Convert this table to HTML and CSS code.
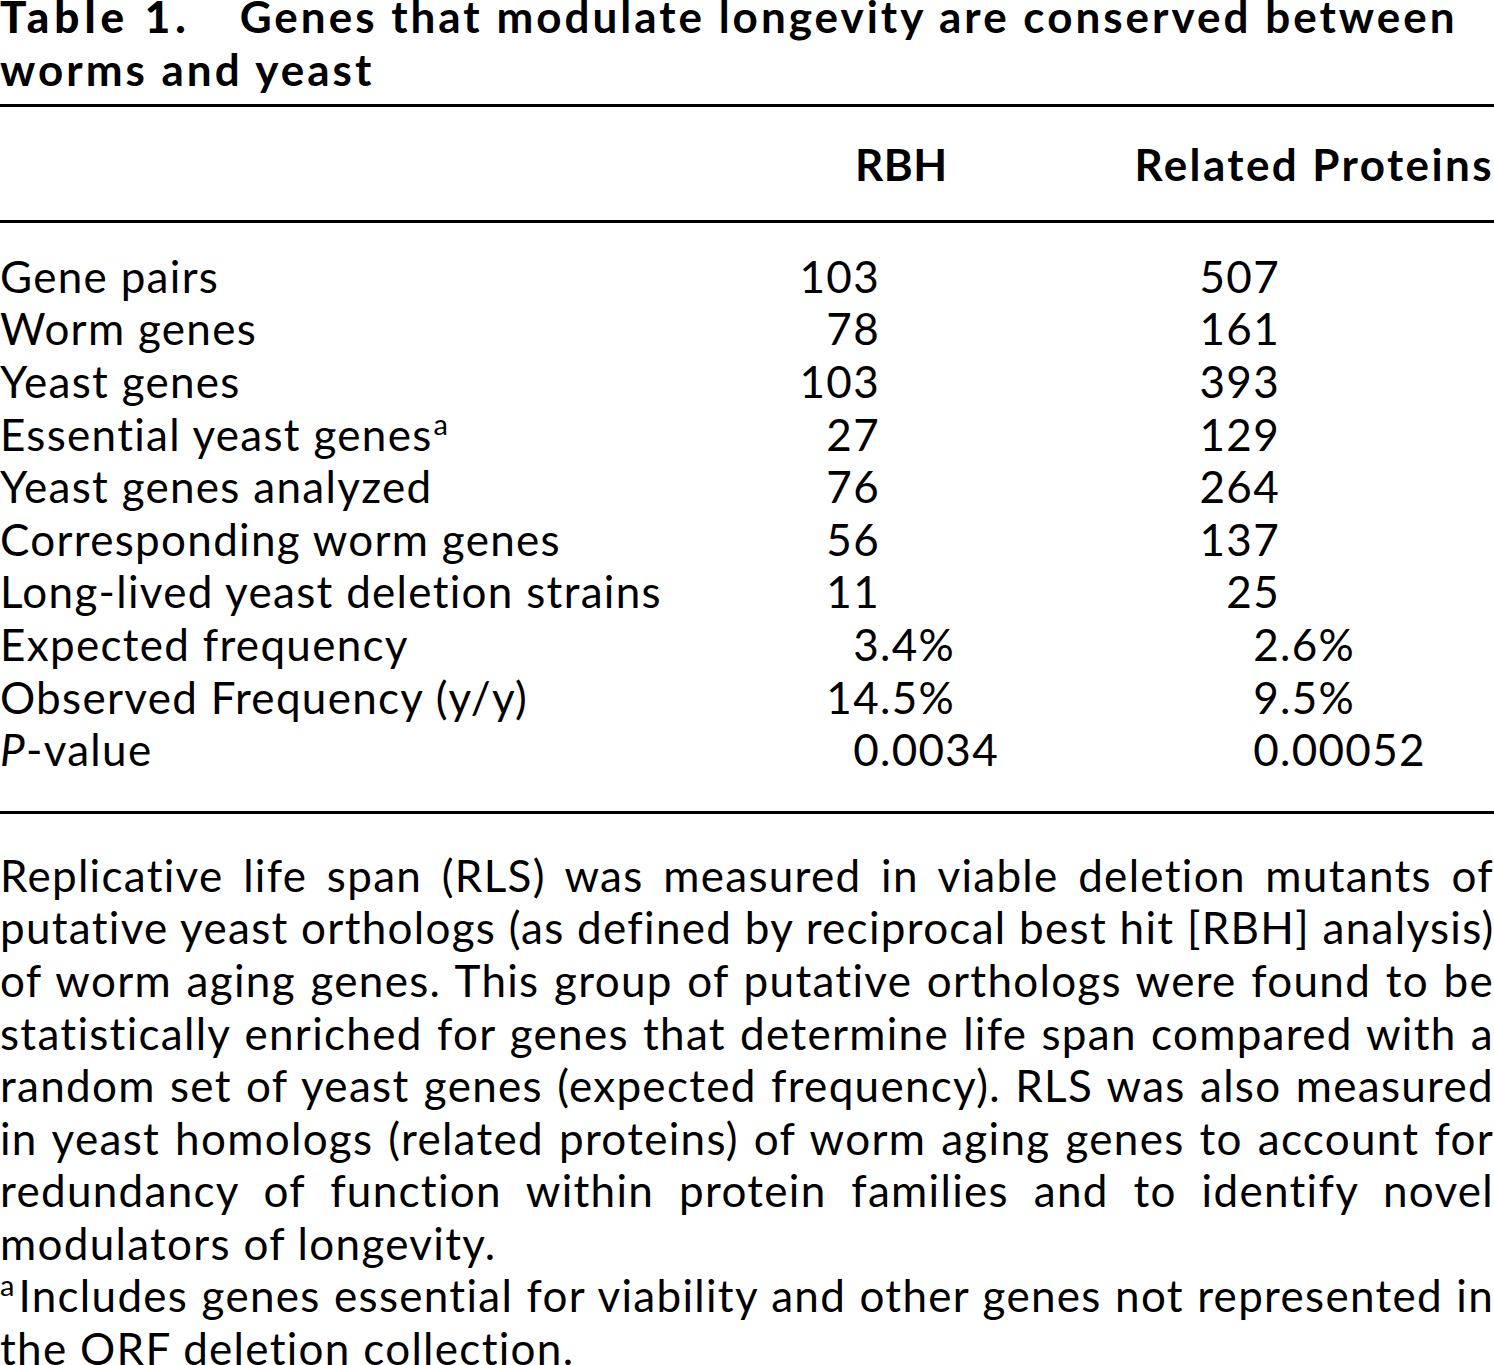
FILE: index.html
```html
<!DOCTYPE html>
<html lang="en">
<head>
<meta charset="utf-8">
<title>Table 1</title>
<link rel="stylesheet" href="styles.css">
</head>
<body>
<div class="table-wrap">
  <h1 class="caption"><span class="label">Table 1.</span>Genes that modulate longevity are conserved between worms and yeast</h1>
  <table class="data">
    <colgroup>
      <col class="c-label">
      <col class="c-rbh">
      <col class="c-rel">
    </colgroup>
    <thead>
      <tr>
        <th class="h-label"></th>
        <th class="h-rbh">RBH</th>
        <th class="h-rel">Related Proteins</th>
      </tr>
    </thead>
    <tbody>
      <tr><td>Gene pairs</td><td class="num n1"><span class="int">103</span></td><td class="num n2"><span class="int">507</span></td></tr>
      <tr><td>Worm genes</td><td class="num n1"><span class="int">78</span></td><td class="num n2"><span class="int">161</span></td></tr>
      <tr><td>Yeast genes</td><td class="num n1"><span class="int">103</span></td><td class="num n2"><span class="int">393</span></td></tr>
      <tr><td>Essential yeast genes<sup class="fn">a</sup></td><td class="num n1"><span class="int">27</span></td><td class="num n2"><span class="int">129</span></td></tr>
      <tr><td>Yeast genes analyzed</td><td class="num n1"><span class="int">76</span></td><td class="num n2"><span class="int">264</span></td></tr>
      <tr><td>Corresponding worm genes</td><td class="num n1"><span class="int">56</span></td><td class="num n2"><span class="int">137</span></td></tr>
      <tr><td>Long-lived yeast deletion strains</td><td class="num n1"><span class="int">11</span></td><td class="num n2"><span class="int">25</span></td></tr>
      <tr><td>Expected frequency</td><td class="num n1"><span class="int">3</span><span class="frac">.4%</span></td><td class="num n2"><span class="int">2</span><span class="frac">.6%</span></td></tr>
      <tr><td>Observed Frequency (y/y)</td><td class="num n1"><span class="int">14</span><span class="frac">.5%</span></td><td class="num n2"><span class="int">9</span><span class="frac">.5%</span></td></tr>
      <tr><td><i>P</i>-value</td><td class="num n1"><span class="int">0</span><span class="frac">.0034</span></td><td class="num n2"><span class="int">0</span><span class="frac">.00052</span></td></tr>
    </tbody>
  </table>
  <div class="notes">
    <p class="note">
      <span class="ln">Replicative life span (RLS) was measured in viable deletion mutants of</span>
      <span class="ln">putative yeast orthologs (as defined by reciprocal best hit [RBH] analysis)</span>
      <span class="ln">of worm aging genes. This group of putative orthologs were found to be</span>
      <span class="ln">statistically enriched for genes that determine life span compared with a</span>
      <span class="ln">random set of yeast genes (expected frequency). RLS was also measured</span>
      <span class="ln">in yeast homologs (related proteins) of worm aging genes to account for</span>
      <span class="ln">redundancy of function within protein families and to identify novel</span>
      <span class="ln last">modulators of longevity.</span>
    </p>
    <p class="note">
      <span class="ln"><sup class="fn fn-lead">a</sup>Includes genes essential for viability and other genes not represented in</span>
      <span class="ln last">the ORF deletion collection.</span>
    </p>
  </div>
</div>
</body>
</html>
```

FILE: styles.css
```css
html, body {
  margin: 0;
  padding: 0;
  background: #ffffff;
}

body {
  font-family: "Lato", "Noto Sans", sans-serif;
  font-size: 44px;
  line-height: 52.6px;
  letter-spacing: 1.3px;
  color: #000000;
  overflow: hidden;
}

.table-wrap {
  width: 1494px;
}

.caption {
  font-size: 44px;
  font-weight: bold;
  letter-spacing: 3px;
  line-height: 52.6px;
  margin: -10px 0 9px 0;
}

.caption .label {
  font-weight: 900;
  letter-spacing: 5px;
  margin-right: 49px;
}

.data {
  width: 100%;
  border-collapse: collapse;
  table-layout: fixed;
  border-top: 3px solid #000;
  border-bottom: 3px solid #000;
}

.c-label { width: 770px; }
.c-rbh { width: 330px; }
.c-rel { width: 394px; }

.data th,
.data td {
  padding: 0;
  font-weight: normal;
  vertical-align: baseline;
  white-space: nowrap;
}

.data thead th {
  font-weight: bold;
  letter-spacing: 2.4px;
  padding-top: 31px;
  padding-bottom: 29px;
  border-bottom: 3px solid #000;
}

.data thead .h-rbh {
  text-align: left;
  letter-spacing: 0.5px;
  padding-left: 85px;
}

.data thead .h-rel {
  text-align: right;
  padding-right: 0;
}

.data tbody tr:first-child td {
  padding-top: 27px;
}

.data tbody tr:last-child td {
  padding-bottom: 35px;
}

.num .int {
  display: inline-block;
  text-align: right;
}

.n1 .int { width: 110px; }
.n2 .int { width: 180px; }

.fn {
  font-size: 29px;
  letter-spacing: 0;
  line-height: 0;
  vertical-align: 16px;
  margin-left: 1px;
}

.fn-lead {
  margin-left: 0;
  margin-right: 4px;
}

.notes {
  margin-top: 35px;
}

.note {
  margin: 0;
}

.note .ln {
  display: block;
  white-space: nowrap;
  text-align: justify;
  text-align-last: justify;
}

.note .ln.last {
  text-align: left;
  text-align-last: left;
}
```
